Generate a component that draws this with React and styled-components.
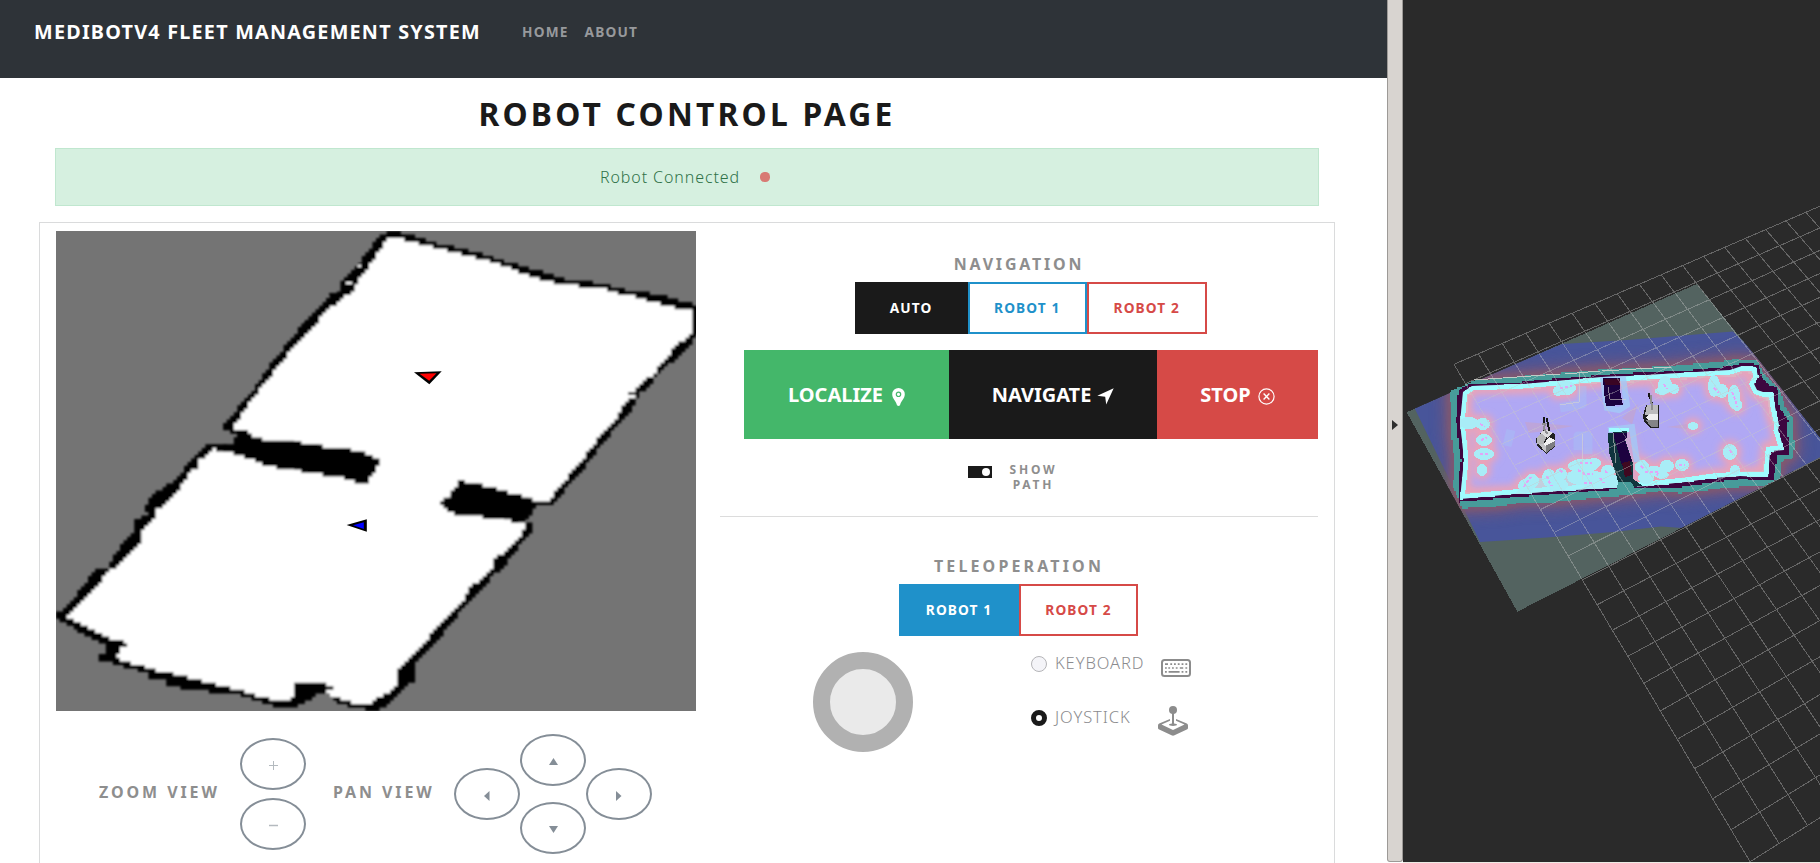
import React from "react";
import styled, { createGlobalStyle, css } from "styled-components";

const GlobalStyle = createGlobalStyle`
  * { box-sizing: border-box; }
  body { margin: 0; background: #fff; font-family: "Noto Sans", "Open Sans", sans-serif; overflow: hidden; }
  svg { display: block; flex: none; }
  button { font-family: inherit; padding: 0; margin: 0; }
`;

/* ---------- page shell ---------- */

const Desktop = styled.div`
  display: flex;
  width: 1820px;
  height: 863px;
  overflow: hidden;
`;

const WebPane = styled.main`
  width: 1387px;
  height: 863px;
  overflow: hidden;
  display: flex;
  flex-direction: column;
  background: #fff;
`;

const Splitter = styled.div`
  width: 16px;
  height: 862px;
  border: 1px solid #9d9a97;
  border-top: 0;
  border-radius: 0 0 3px 3px;
  background: #d8d4d0;
  display: flex;
  align-items: center;
  justify-content: center;
  padding-bottom: 11px;
`;

const VizPane = styled.section`
  width: 417px;
  height: 863px;
  background: #2a2a2a;
  border-bottom: 1px solid #edebe4;
`;

/* ---------- navigation bar ---------- */

const NavBar = styled.header`
  flex: none;
  display: flex;
  align-items: center;
  height: 78px;
  padding: 0 34px 15px;
  background: #2e3338;
`;

const Brand = styled.div`
  width: 488px;
  font-size: 19.8px;
  font-weight: 700;
  letter-spacing: 1.23px;
  color: #fff;
  white-space: nowrap;
`;

const NavLink = styled.a`
  width: 62.5px;
  font-size: 13.7px;
  font-weight: 700;
  letter-spacing: 1.2px;
  color: #97999c;
`;

/* ---------- page head ---------- */

const PageTitle = styled.h1`
  flex: none;
  height: 70px;
  margin: 0;
  line-height: 71px;
  text-align: center;
  font-size: 31.8px;
  font-weight: 700;
  letter-spacing: 3.2px;
  color: #1a1a1a;
  padding-right: 13px;
`;

const Alert = styled.div`
  flex: none;
  display: flex;
  align-items: center;
  justify-content: center;
  gap: 20px;
  height: 58px;
  margin: 0 68px 16px 55px;
  padding-right: 4px;
  border: 1px solid #c0e7cf;
  background: #d6f0e0;
  color: #2f7248;
  font-size: 16px;
  font-weight: 300;
  letter-spacing: 0.9px;
`;

const StatusDot = styled.span`
  width: 10px;
  height: 10px;
  border-radius: 4.5px;
  background: #d87a74;
`;

const Card = styled.div`
  flex: none;
  display: flex;
  gap: 24px;
  width: 1296px;
  height: 660px;
  margin-left: 39px;
  padding: 8px 16px;
  border: 1px solid #dadbdc;
`;

const MapColumn = styled.div`
  width: 640px;
`;

const ControlColumn = styled.div`
  width: 598px;
  display: flex;
  flex-direction: column;
  align-items: center;
  padding-top: 23px;
`;

/* ---------- map view controls ---------- */

const ViewControls = styled.div`
  display: flex;
  align-items: flex-start;
  padding: 23px 0 0 43px;
`;

const ViewLabel = styled.div`
  width: ${(p) => p.$width}px;
  margin-top: 48px;
  line-height: 20px;
  font-size: 16px;
  font-weight: 700;
  letter-spacing: 2.9px;
  color: #8e8e8e;
  white-space: nowrap;
`;

const ZoomButtons = styled.div`
  display: flex;
  flex-direction: column;
  gap: 8px;
  margin: 4px 27px 0 0;
`;

const PanPad = styled.div`
  display: grid;
  grid-template-columns: repeat(3, 66px);
  grid-template-rows: 34px 34px 52px;
`;

const RoundButton = styled.button`
  width: 66px;
  height: 52px;
  border: 2px solid #858e97;
  border-radius: 50%;
  background: #fff;
  display: flex;
  align-items: center;
  justify-content: center;
  padding-top: 3px;
  grid-column: ${(p) => p.$col || "auto"};
  grid-row: ${(p) => p.$row || "auto"};
`;

/* ---------- control panel ---------- */

const SectionTitle = styled.h4`
  margin: 0 0 8px;
  line-height: 20px;
  font-size: 16px;
  font-weight: 700;
  letter-spacing: ${(p) => p.$spacing}px;
  color: #8e8e8e;
`;

const ButtonGroup = styled.div`
  display: flex;
  height: 52px;
  margin-bottom: 16px;
  margin-left: ${(p) => p.$shift}px;
`;

const tones = {
  dark: "#1a1a1a",
  blue: "#1f91ca",
  red: "#d64a47",
};

const ChoiceButton = styled.button`
  width: ${(p) => p.$width}px;
  border: 2px solid ${(p) => tones[p.$tone]};
  background: ${(p) => (p.$active ? tones[p.$tone] : "#fff")};
  color: ${(p) => (p.$active ? "#fff" : tones[p.$tone])};
  font-size: 13.7px;
  font-weight: 700;
  letter-spacing: 1.1px;
  line-height: 48px;
  & + & { margin-left: ${(p) => (p.$overlap ? -1 : 0)}px; }
`;

const ActionBar = styled.div`
  display: flex;
  align-self: flex-end;
  width: 574px;
  height: 89px;
  margin-bottom: 23px;
`;

const ActionButton = styled.button`
  width: ${(p) => p.$width}px;
  border: 0;
  background: ${(p) => p.$color};
  color: #fff;
  font-size: 20px;
  font-weight: 700;
  display: flex;
  align-items: center;
  justify-content: center;
  gap: ${(p) => p.$gap}px;
  svg { margin-top: 4px; }
`;

const PathToggle = styled.label`
  display: flex;
  gap: 13px;
  width: 102px;
  height: 30px;
  margin-bottom: 24px;
`;

const Switch = styled.span`
  width: 24px;
  height: 12px;
  margin-top: 4px;
  padding: 2px;
  background: #1a1a1a;
  display: flex;
  justify-content: flex-end;
  &::after {
    content: "";
    width: 8px;
    height: 8px;
    border-radius: 4px;
    background: #fff;
  }
`;

const ToggleText = styled.span`
  width: 57px;
  text-align: center;
  font-size: 12px;
  line-height: 15px;
  font-weight: 700;
  letter-spacing: 2.8px;
  color: #8e8e8e;
`;

const Divider = styled.hr`
  width: 598px;
  height: 1px;
  margin: 0 0 39px;
  border: 0;
  background: #dcdcdc;
`;

const TeleopRow = styled.div`
  align-self: stretch;
  display: flex;
  gap: 118px;
  padding-left: 93px;
`;

const Joystick = styled.div`
  width: 100px;
  height: 100px;
  border: 17px solid #b1b1b1;
  border-radius: 50%;
  background: #eaeaea;
`;

const InputModes = styled.div`
  display: flex;
  flex-direction: column;
`;

const InputMode = styled.label`
  display: flex;
  align-items: center;
  height: 54px;
  padding-bottom: 30px;
`;

const Radio = styled.span`
  width: 16px;
  height: 16px;
  border-radius: 50%;
  border: 1px solid #b5b5b8;
  background: #f4f4f8;
  ${(p) => p.$checked && css`
    border: 5px solid #1a1a1a;
    background: #fff;
  `}
`;

const ModeName = styled.span`
  width: ${(p) => p.$width}px;
  margin-left: 8px;
  padding-bottom: 3px;
  font-size: 16.5px;
  font-weight: 300;
  letter-spacing: 0.9px;
  color: #8b8b8e;
  white-space: nowrap;
`;

const IconShift = styled.span`
  padding-top: ${(p) => p.$top}px;
`;

/* ---------- occupancy map ---------- */

const toPoints = (text) =>
  text.trim().split(/\s+/).map((p) => p.split(",").map(Number));

/* Scan converts a polygon into grid cells; with grow, partly covered cells count too. */
function rasterize(text, cell, ox, oy, grow = false) {
  const pts = toPoints(text);
  const ys = pts.map((p) => p[1]);
  const first = Math.floor((Math.min(...ys) - oy) / cell);
  const last = Math.ceil((Math.max(...ys) - oy) / cell);
  const start = grow ? Math.floor : Math.round;
  const end = grow ? Math.ceil : Math.round;
  let d = "";
  for (let row = first; row <= last; row++) {
    const y = oy + (row + 0.5) * cell;
    const hits = [];
    pts.forEach(([x1, y1], i) => {
      const [x2, y2] = pts[(i + 1) % pts.length];
      if (y1 <= y !== y2 <= y) hits.push(x1 + ((y - y1) * (x2 - x1)) / (y2 - y1));
    });
    hits.sort((a, b) => a - b);
    for (let i = 0; i + 1 < hits.length; i += 2) {
      const a = ox + start((hits[i] - ox) / cell) * cell;
      const b = ox + end((hits[i + 1] - ox) / cell) * cell;
      if (b > a) d += `M${a.toFixed(2)} ${(oy + row * cell).toFixed(2)}H${b.toFixed(2)}v${(cell + 0.15).toFixed(2)}H${a.toFixed(2)}z`;
    }
  }
  return d;
}

const WALLS = `392,231 407,234 437,244 470,251 493,258 520,266 537,271 567,280 597,283 617,289 637,291
  670,298 696,306 700,308 700,335 696,335 682,352 670,362 653,378 648,387 637,392 636,398 628,412 620,422
  603,440 587,462 570,482 552,503 533,504 531,514 523,520 532,525 530,532 517,547 505,560 505,566 493,574
  477,592 460,609 447,627 430,646 415,662 412,681 402,688 387,704 375,711 360,708 337,702 330,694 313,695
  307,701 297,703 294,709 284,708 257,700 240,694 207,691 190,690 168,685 167,680 150,679 150,673 130,668
  113,663 98,659 107,652 108,645 100,642 77,629 56,618 56,615 67,608 77,598 82,588 98,570 110,567 115,555
  135,533 137,521 150,513 146,507 155,495 172,483 182,477 186,466 193,461 198,455 207,446 208,443 213,445
  235,447 240,445 240,436 225,429 225,426 240,408 257,387 273,363 290,343 303,326 315,312 330,299 343,290
  343,280 357,267 370,252 376,242 385,234`;

const FLOOR = `390,236 437,248 493,262 522,273 547,281 567,285 600,288 617,293 637,297 663,305 692,311
  693,332 675,347 667,358 652,375 637,387 636,396 625,402 620,412 613,422 597,440 580,462 563,482 550,500
  533,500 531,498 505,492 470,483 450,495 441,506 455,514 508,520 522,522 526,527 519,530 525,532 517,539
  513,545 503,553 495,558 493,567 483,577 470,587 469,592 457,608 442,623 423,643 405,663 396,671 397,683
  387,694 377,697 372,703 357,704 337,698 326,692 333,687 320,681 295,683 293,697 287,701 273,700 240,690
  207,682 177,674 163,672 150,669 140,665 117,659 121,648 132,644 115,640 90,628 68,617 73,610 88,597
  107,573 120,563 140,542 142,529 157,517 157,510 167,503 183,484 190,472 198,468 200,460 213,449 227,450
  253,460 267,466 320,474 372,462 380,459 355,450 322,446 290,441 250,438 253,434 240,431 233,429 240,417
  257,393 273,373 290,352 307,333 317,323 327,310 340,301 355,290 358,279 373,262 380,249`;

const PILLAR_LEFT = `233,444 240,430 254,434 250,439 290,442 320,446 327,448 353,451 373,457 380,459 378,466
  366,484 357,484 350,479 323,475 287,466 267,466 253,460 227,451 212,449`;

const PILLAR_RIGHT = `460,480 470,483 492,487 505,492 520,494 531,500 531,513 513,524 508,518 480,512 453,505
  440,504 450,495`;

const CELL = 640 / 180;
const cells = (poly, grow) => rasterize(poly, CELL, 56, 231, grow);

function OccupancyMap() {
  return (
    <svg width="640" height="480" viewBox="56 231 640 480">
      <defs>
        <filter id="resample" x="0" y="0" width="100%" height="100%"><feGaussianBlur stdDeviation="0.8" /></filter>
      </defs>
      <rect x="56" y="231" width="640" height="480" fill="#747474" />
      <g filter="url(#resample)">
        <path d={cells(WALLS, true)} fill="#000" />
        <path d={cells(FLOOR)} fill="#fff" />
        <path d={cells(PILLAR_LEFT) + cells(PILLAR_RIGHT)} fill="#000" />
        <path d="M361 288h3v-2h-3zM346 284h6v-2h-6zM358 267h3v-2h-3z" fill="#fff" />
        <path d="M326 298h14v2h-14zM329 293h15v2h-15zM304 322h9v3h-9zM628 392h9v3h-9z" fill="#000" />
      </g>
      <path d="M414 372.3L441.7 371.2L429.3 384.2z" fill="#000" />
      <path d="M419.5 373.8L436.5 373.2L429.2 380.8z" fill="#f00" />
      <path d="M346.6 525L366.8 519.2V531.8z" fill="#000" />
      <path d="M353 525.2L363.8 522.2V529z" fill="#00f" />
    </svg>
  );
}

/* ---------- 3D view ---------- */

/* Perspective of the 20 x 20 ground grid. */
const project = (u, v) => {
  const w = 1 + 0.00709 * u - 0.01171 * v;
  return `${((1454 + 34.79 * u - 5.69 * v) / w).toFixed(1)} ${((364.3 - 7.994 * u + 14.78 * v) / w).toFixed(1)}`;
};

const GRID = Array.from({ length: 21 }, (_, i) =>
  `M${project(i, 0)}L${project(i, 20)}M${project(0, i)}L${project(20, i)}`
).join("");

const COSTMAP = "M1406.7 412.3L1696.7 284L1760 361.7L1820 438V457.3L1517.3 611.7z";

const OUTER = `1450,391 1475,380 1557,373 1607,369 1667,366 1723,361 1733,359 1757,360 1763,373 1780,390
  1785,407 1793,418 1793,437 1795,443 1792,458 1782,460 1780,478 1763,486 1730,487 1680,493 1660,491 1627,495
  1593,498 1553,502 1523,502 1500,506 1462,508 1453,487 1454,460 1451,433`;

const WALL = `1458,390 1468,384 1520,382 1535,380 1600,375 1627,373 1690,370 1730,366 1742,363 1758,364 1762,378
  1768,384 1777,388 1779,407 1788,420 1786,434 1789,438 1788,455 1777,455 1773,480 1740,479 1713,482 1680,487
  1633,488 1590,491 1513,497 1490,499 1458,502 1458,480 1461,460 1458,440 1456,420`;

const LETHAL = `1463,392 1472,386 1523,384 1602,377 1630,376 1730,370 1742,366 1756,367 1758,377 1754,384
  1757,390 1763,392 1773,392 1775,407 1779,425 1778,430 1784,450 1770,451 1768,477 1740,476 1713,478 1685,482
  1646,486 1587,489 1513,494 1460,499 1462,480 1464,460 1462,440 1460,423`;

const FREE = `1468,395 1475,390 1525,389 1600,383 1630,382 1735,376 1745,371 1752,375 1749,385 1755,395 1767,400
  1770,415 1775,430 1777,445 1766,446 1762,471 1740,471 1713,473 1680,478 1646,481 1587,484 1513,490 1466,492
  1468,460 1466,430`;

const blobs = [
  [1566, 388, 10, 7], [1558, 391, 5, 5], [1665, 385, 7, 9], [1662, 391, 7, 4], [1674, 389, 5, 5],
  [1714, 386, 6, 11], [1722, 391, 6, 7], [1734, 397, 6, 12], [1737, 405, 5, 6], [1469, 423, 10, 6],
  [1483, 424, 7, 6], [1484, 440, 8, 6], [1484, 454, 10, 6], [1482, 470, 5, 6], [1693, 426, 5, 4],
  [1730, 452, 7, 8], [1682, 465, 7, 6], [1667, 466, 7, 6], [1532, 481, 7, 7], [1526, 486, 8, 7],
  [1549, 478, 7, 9], [1561, 474, 6, 6], [1558, 485, 10, 7], [1583, 466, 15, 7], [1594, 463, 7, 5],
  [1580, 477, 13, 8], [1594, 480, 13, 9], [1608, 471, 7, 6], [1609, 483, 8, 6], [1642, 467, 7, 7],
  [1654, 471, 9, 5], [1646, 478, 8, 6], [1735, 470, 5, 5], [1662, 475, 7, 4], [1614, 482, 6, 7],
];

const specks = `M1524 487l3 -5l4 -5M1547 476l2 6l3 4M1560 470l4 4M1580 463h12M1578 470l6 4h9M1600 478l4 5
  M1584 483h10M1605 471l4 3M1645 472h14l-3 4M1480 424l5 2M1481 440l6 -2M1480 454l8 0M1664 384l3 5
  M1732 392l3 7l2 8M1714 388l5 5M1641 466l4 4M1679 465h6M1730 450l2 5M1560 388l12 -2`;

/* The lean model faces the camera at an angle; the other one is seen side on. */
function RobotModel({ x, y, lean }) {
  if (lean) {
    return (
      <g transform={`translate(${x} ${y})`} shapeRendering="crispEdges">
        <path d="M0 19L9 9L19 14L20 26L11 34L2 26z" fill="#222224" />
        <path d="M1 18L9 10L12 14L8 24L2 24z" fill="#b5b5b6" />
        <path d="M5 13L10 9L17 13L12 18z" fill="#dcdcdd" />
        <path d="M8 24L14 17L19 20V21L10 26z" fill="#f2f2f2" />
        <path d="M10 26L19 21V26L11 33z" fill="#7d7d80" />
        <path d="M3 24L8 24L10 26V32z" fill="#c4c4c6" />
        <path d="M8 -3V3M11 -2L14 11" fill="none" stroke="#161616" strokeWidth="2" />
        <path d="M6 4L10 4L8 8L12 14" fill="none" stroke="#8e8e90" strokeWidth="2" />
      </g>
    );
  }
  return (
    <g transform={`translate(${x} ${y})`} shapeRendering="crispEdges">
      <path d="M0 22L3 11H16V34H8L1 28z" fill="#1e1e20" />
      <path d="M2 21L4 11H15V21z" fill="#bcbcbd" />
      <path d="M3 23L7 20H15V26H5z" fill="#efefef" />
      <path d="M3 26H15V33H8z" fill="#848487" />
      <path d="M6 -1V3M6 2L9 9" fill="none" stroke="#161616" strokeWidth="1.6" />
      <path d="M8 1V10M9 9V16" fill="none" stroke="#8e8e90" strokeWidth="1.6" />
    </g>
  );
}

function RvizScene() {
  return (
    <svg width="417" height="862" viewBox="1403 0 417 862">
      <defs>
        <clipPath id="area"><path d={COSTMAP} /></clipPath>
        <clipPath id="room"><polygon points={LETHAL} /></clipPath>
        <filter id="glow" x="-20%" y="-20%" width="140%" height="140%"><feGaussianBlur stdDeviation="7" /></filter>
        <filter id="halo" x="-20%" y="-20%" width="140%" height="140%"><feGaussianBlur stdDeviation="3.5" /></filter>
      </defs>
      <path d={COSTMAP} fill="#536360" shapeRendering="crispEdges" />
      <g clipPath="url(#area)">
        <path
          d="M1413 405L1480 542L1547 537.5L1613 532L1661 526.5L1682 528L1830 460V425L1733 331.5L1627 340L1562 344z"
          fill="#48559a"
        />
        <polygon points={OUTER} fill="#8a5668" stroke="#75567a" strokeWidth="15" filter="url(#glow)" opacity="0.9" />
        <polygon points={OUTER} fill="none" stroke="#925a62" strokeWidth="4" filter="url(#halo)" />
      </g>
      <g shapeRendering="crispEdges">
        <path d={rasterize(OUTER, 1.5, 1403, 0)} fill="#479b9a" />
        <path d={rasterize(WALL, 1.5, 1403, 0)} fill="#3d0640" />
        <path d={rasterize(LETHAL, 1.5, 1403, 0)} fill="#9ffcff" />
        <path d={rasterize(FREE, 1.5, 1403, 0)} fill="#b0a8f4" />
        <path d="M1754 383l7 2l14 4l1 3l-5 1l-8 -1l-5 1l-5 -5zM1780 420l7 2v14l-5 4l-3 -8z" fill="#3d0640" />
      </g>
      <g clipPath="url(#room)">
        <polygon points={FREE} fill="none" stroke="#eda3b4" strokeWidth="9" filter="url(#halo)" />
        <g fill="#eba3b8" filter="url(#halo)">
          {blobs.map(([x, y, rx, ry]) => <ellipse key={`${x}-${y}`} cx={x} cy={y} rx={rx + 4} ry={ry + 4} />)}
          <path d="M1612 440L1632 425L1645 470L1608 478z" opacity="0.5" />
        </g>
        <path d="M1525 422l48 4l-20 4l-24 3zM1667 427l20 -3v5zM1622 418l16 -14l-6 20z" fill="#c3a4cf" opacity="0.7" />
        <polygon points={LETHAL} fill="none" stroke="#9ffcff" strokeWidth="9" shapeRendering="crispEdges" />
        <g fill="#a9edf7" shapeRendering="crispEdges">
          {blobs.map(([x, y, rx, ry]) => <ellipse key={`${x}-${y}`} cx={x} cy={y} rx={rx} ry={ry} />)}
          <path d="M1513 495L1530 480L1580 470L1612 480L1612 492z" opacity="0.6" />
        </g>
        <path d="M1560 408l22 -4v-18M1507 446l4 -16M1578 450v-14h10v18" fill="none" stroke="#a6c2f6" strokeWidth="9" strokeLinejoin="round" opacity="0.45" />
        <path d="M1603 378h20l4 27l-8 5l-12 -2zM1608 430l24 -3l5 35" fill="none" stroke="#a3c9f8" strokeWidth="6" opacity="0.8" />
        <path d="M1609 430h20" fill="none" stroke="#9ffcff" strokeWidth="4" />
        <path d={specks} fill="none" stroke="#e3a5f8" strokeWidth="2" strokeDasharray="3 2" shapeRendering="crispEdges" />
      </g>
      <g shapeRendering="crispEdges">
        <path d="M1603 378L1620 378L1620 390L1623 405L1606 406L1604 392z" fill="#1c0240" />
        <path d="M1604 379h16v6h-15z" fill="#3a0524" />
        <path d="M1608 433L1627 431V437L1625 440L1633 463V479L1643 486L1620 488L1617 478L1613 465L1609 452z" fill="#10343d" />
        <path d="M1613 433H1627V437L1625 440L1632 461L1622 466z" fill="#1d0240" />
        <path d="M1622 463l8 -2l2 14l-7 2z" fill="#3f0820" />
        <path d="M1618 482h13l5 8l-8 5l-12 -2z" fill="#479b9a" />
        <path d="M1474 380L1560 374M1565 374L1600 371M1602 371L1671 367" stroke="#d6d6cf" strokeWidth="1" fill="none" opacity="0.85" />
        <path d="M1579 373V402L1560 405M1608 387L1610 399H1626M1613 433L1616 463M1582 433L1583 480" stroke="#d6d6cf" strokeWidth="1" fill="none" opacity="0.6" />
        <path d={GRID} stroke="#c9c9c9" strokeWidth="1" fill="none" opacity="0.38" />
      </g>
      <RobotModel x={1535.5} y={420} lean />
      <RobotModel x={1643} y={394} />
    </svg>
  );
}

/* ---------- icons ---------- */

const arrows = {
  up: "M4.5 0L9 7H0z",
  down: "M0 0H9L4.5 7z",
  left: "M5.5 0V10L0 5z",
  right: "M0 0V10L5.5 5z",
};

function Arrow({ dir }) {
  const flat = dir === "up" || dir === "down";
  return (
    <svg width={flat ? 9 : 6} height={flat ? 7 : 10} fill="#858e97">
      <path d={arrows[dir]} />
    </svg>
  );
}

const PlusIcon = () => (
  <svg width="9" height="9" stroke="#b4babf"><path d="M0 4.5H9M4.5 0V9" /></svg>
);

const MinusIcon = () => (
  <svg width="9" height="9" stroke="#b4babf" strokeWidth="1.5"><path d="M0 4.5H9" /></svg>
);

const PinIcon = () => (
  <svg width="13" height="18" viewBox="0 0 13 18">
    <path d="M6.5 0A6.3 6.3 0 0 0 .2 6.3C.2 10.5 4 13 5 17.2Q6.5 18.6 8 17.2C9 13 12.8 10.5 12.8 6.3A6.3 6.3 0 0 0 6.5 0z" fill="#fff" />
    <circle cx="6.5" cy="6.3" r="2.2" fill="#fff" stroke="#44b76a" strokeWidth="1.2" />
  </svg>
);

const LocationArrow = () => (
  <svg width="17" height="17" viewBox="0 0 17 17"><path d="M16.7.3L9.2 16.6L8.2 8.8L.3 7.8z" fill="#fff" /></svg>
);

const CircleX = () => (
  <svg width="17" height="17" viewBox="0 0 17 17" fill="none" stroke="#fff" strokeWidth="1.2">
    <circle cx="8.5" cy="8.5" r="7.6" />
    <path d="M5.6 5.6L11.4 11.4M11.4 5.6L5.6 11.4" strokeWidth="1.4" />
  </svg>
);

const KeyboardIcon = () => (
  <svg width="30" height="18" viewBox="0 0 30 18" fill="none" stroke="#8c8c8c">
    <rect x="1" y="1" width="28" height="16" rx="2.5" strokeWidth="2" />
    <path d="M4 5.2h3M9.3 5.2h1.8M13 5.2h1.8M16.8 5.2h1.8M20.6 5.2h1.8M24.4 5.2h1.8M4 9h1.8M7.3 9h1.8M11 9h1.8M14.8 9h1.8M18.8 9h3.4M24.4 9h1.8M4 12.8h1.8M7.6 12.8h11M20.6 12.8h1.8M24.4 12.8h1.8" strokeWidth="1.7" />
  </svg>
);

const JoystickIcon = () => (
  <svg width="30" height="30" viewBox="0 0 30 30" fill="#8c8c8c">
    <circle cx="15" cy="4" r="4" />
    <path d="M14 7h2v10.4c1.8.1 3 .6 3 1.3s-1.8 1.2-4 1.2-4-.5-4-1.2 1.2-1.2 3-1.3z" />
    <path d="M12 13L1.2 17.6Q0 18.2 0 19.4V22Q0 23 1.2 23.6L13.5 29.3Q15 30 16.5 29.3L28.8 23.6Q30 23 30 22V19.4Q30 18.2 28.8 17.6L18 13V14.8L26.5 18.5L15 24L3.5 18.5L12 14.8z" />
  </svg>
);

const SplitterArrow = () => (
  <svg width="6" height="10"><path d="M0 0L6 5L0 10z" fill="#2e2e2e" /></svg>
);

/* ---------- app ---------- */

export default function App() {
  return (
    <Desktop>
      <GlobalStyle />
      <WebPane>
        <NavBar>
          <Brand>MEDIBOTV4 FLEET MANAGEMENT SYSTEM</Brand>
          <NavLink>HOME</NavLink>
          <NavLink>ABOUT</NavLink>
        </NavBar>
        <PageTitle>ROBOT CONTROL PAGE</PageTitle>
        <Alert>
          Robot Connected
          <StatusDot />
        </Alert>
        <Card>
          <MapColumn>
            <OccupancyMap />
            <ViewControls>
              <ViewLabel $width={141}>ZOOM VIEW</ViewLabel>
              <ZoomButtons>
                <RoundButton><PlusIcon /></RoundButton>
                <RoundButton><MinusIcon /></RoundButton>
              </ZoomButtons>
              <ViewLabel $width={121}>PAN VIEW</ViewLabel>
              <PanPad>
                <RoundButton $col={2} $row={1}><Arrow dir="up" /></RoundButton>
                <RoundButton $col={1} $row={2}><Arrow dir="left" /></RoundButton>
                <RoundButton $col={3} $row={2}><Arrow dir="right" /></RoundButton>
                <RoundButton $col={2} $row={3}><Arrow dir="down" /></RoundButton>
              </PanPad>
            </ViewControls>
          </MapColumn>
          <ControlColumn>
            <SectionTitle $spacing={2.8}>NAVIGATION</SectionTitle>
            <ButtonGroup $shift={23}>
              <ChoiceButton $width={113} $tone="dark" $active>AUTO</ChoiceButton>
              <ChoiceButton $width={119.5} $tone="blue">ROBOT 1</ChoiceButton>
              <ChoiceButton $width={119.5} $tone="red" $overlap>ROBOT 2</ChoiceButton>
            </ButtonGroup>
            <ActionBar>
              <ActionButton $width={205} $color="#44b76a" $gap={9}>LOCALIZE<PinIcon /></ActionButton>
              <ActionButton $width={208} $color="#1a1a1a" $gap={6}>NAVIGATE<LocationArrow /></ActionButton>
              <ActionButton $width={161} $color="#d64a47" $gap={7}>STOP<CircleX /></ActionButton>
            </ActionBar>
            <PathToggle>
              <Switch />
              <ToggleText>SHOW PATH</ToggleText>
            </PathToggle>
            <Divider />
            <SectionTitle $spacing={3.15}>TELEOPERATION</SectionTitle>
            <ButtonGroup $shift={-1}>
              <ChoiceButton $width={120} $tone="blue" $active>ROBOT 1</ChoiceButton>
              <ChoiceButton $width={119} $tone="red">ROBOT 2</ChoiceButton>
            </ButtonGroup>
            <TeleopRow>
              <Joystick />
              <InputModes>
                <InputMode>
                  <Radio />
                  <ModeName $width={106}>KEYBOARD</ModeName>
                  <IconShift $top={8}><KeyboardIcon /></IconShift>
                </InputMode>
                <InputMode>
                  <Radio $checked />
                  <ModeName $width={103}>JOYSTICK</ModeName>
                  <IconShift $top={5}><JoystickIcon /></IconShift>
                </InputMode>
              </InputModes>
            </TeleopRow>
          </ControlColumn>
        </Card>
      </WebPane>
      <Splitter><SplitterArrow /></Splitter>
      <VizPane><RvizScene /></VizPane>
    </Desktop>
  );
}
